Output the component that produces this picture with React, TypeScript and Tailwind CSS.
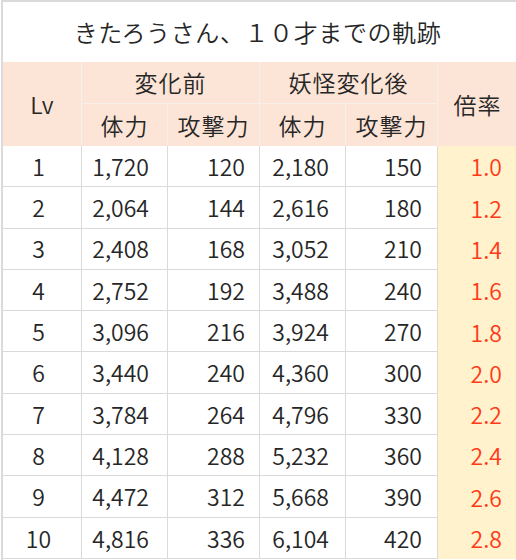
import React from "react";

const rows: [string, string, string, string, string, string][] = [
  ["1", "1,720", "120", "2,180", "150", "1.0"],
  ["2", "2,064", "144", "2,616", "180", "1.2"],
  ["3", "2,408", "168", "3,052", "210", "1.4"],
  ["4", "2,752", "192", "3,488", "240", "1.6"],
  ["5", "3,096", "216", "3,924", "270", "1.8"],
  ["6", "3,440", "240", "4,360", "300", "2.0"],
  ["7", "3,784", "264", "4,796", "330", "2.2"],
  ["8", "4,128", "288", "5,232", "360", "2.4"],
  ["9", "4,472", "312", "5,668", "390", "2.6"],
  ["10", "4,816", "336", "6,104", "420", "2.8"],
];

const App = () => {
  return (
    <div
      className="w-[516px] h-[560px] overflow-hidden bg-white text-[#262626] pl-px font-[350]"
      style={{ fontFamily: '"Noto Sans CJK JP", "Noto Sans", sans-serif' }}
    >
      <div className="h-full border-l-2 border-t-2 border-[#dadada]">
        <h1 className="h-[60px] flex items-center justify-center text-[24px] font-[350] tracking-[0.6px] pr-1">
          きたろうさん、１０才までの軌跡
        </h1>

        <div className="grid grid-cols-[79px_86px_92px_86px_92px_79px] grid-rows-[42px_42px] bg-[#fce4d6] text-[23px]">
          <div className="row-span-2 flex items-center justify-center border-r border-[#f6efec]">Lv</div>
          <div className="col-span-2 flex items-center justify-center border-r border-b border-[#f6efec] tracking-[1px]">
            変化前
          </div>
          <div className="col-span-2 flex items-center justify-center border-r border-b border-[#f6efec] tracking-[1px]">
            妖怪変化後
          </div>
          <div className="row-span-2 flex items-center justify-center tracking-[1px]">倍率</div>
          <div className="flex items-center justify-center border-r border-[#f6efec] tracking-[1px]">体力</div>
          <div className="flex items-center justify-center border-r border-[#f6efec] tracking-[1px]">攻撃力</div>
          <div className="flex items-center justify-center border-r border-[#f6efec] tracking-[1px]">体力</div>
          <div className="flex items-center justify-center border-r border-[#f6efec] tracking-[1px]">攻撃力</div>
        </div>

        <div className="grid grid-cols-[79px_86px_92px_86px_92px_79px] auto-rows-[41.3px] text-[23px]">
          {rows.map((r, i) => (
            <React.Fragment key={i}>
              <div className="flex items-center justify-center pr-[7px] border-r border-b border-[#dadada]">{r[0]}</div>
              <div className="flex items-center justify-end pr-[18px] border-r border-b border-[#dadada]">{r[1]}</div>
              <div className="flex items-center justify-end pr-[14px] border-r border-b border-[#dadada]">{r[2]}</div>
              <div className="flex items-center justify-end pr-[16px] border-r border-b border-[#dadada]">{r[3]}</div>
              <div className="flex items-center justify-end pr-[15px] border-r border-b border-[#dadada]">{r[4]}</div>
              <div className="flex items-center justify-end pr-[15px] bg-[#fff2cc] text-[#ff3a17]">{r[5]}</div>
            </React.Fragment>
          ))}
        </div>
      </div>
    </div>
  );
};

export default App;
